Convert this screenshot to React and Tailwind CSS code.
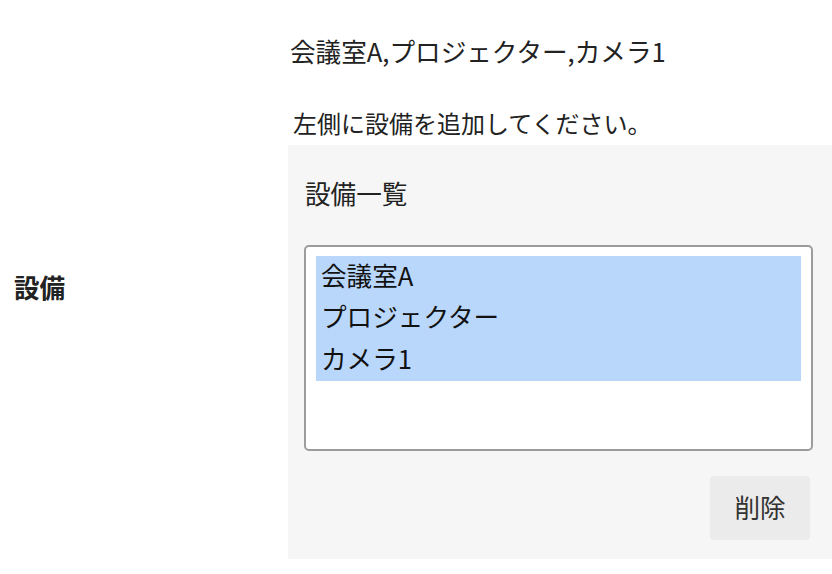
import React from 'react';

const items = ['会議室A', 'プロジェクター', 'カメラ1'];

const App = () => {
  return (
    <div className="flex w-[832px] h-[574px] bg-white text-[25.6px] text-[#222] font-['Noto_Sans_CJK_JP','Noto_Sans',sans-serif]">
      <div className="w-[288px] shrink-0 flex items-center pl-[14px] pt-[1px] font-bold">設備</div>

      <div className="flex-1 pt-[32px]">
        <p className="leading-[38px] pl-[2px]">会議室A,プロジェクター,カメラ1</p>
        <p className="mt-[34px] leading-[38px] pl-[5px] text-[24px]">左側に設備を追加してください。</p>

        <div className="mt-[3px] bg-[#f6f6f6] pl-4 pr-[19px] pt-[30px] pb-[19px]">
          <p className="leading-[38px] pl-[1px] -mt-[1px] pb-[1px]">設備一覧</p>
          <div className="mt-[32px] h-[206px] border-2 border-[#9c9c9c] rounded-[5px] bg-white px-[10px] py-[9px]">
            <div className="bg-[#b9d7fa]">
              {items.map((item) => (
                <div key={item} className="h-[41.7px] flex items-center px-[5px] pb-[4px] text-[#111]">
                  {item}
                </div>
              ))}
            </div>
          </div>
          <div className="flex justify-end mt-[25px] pr-[3px]">
            <button className="w-[100px] h-[64px] bg-[#ebebeb] rounded-[4px] text-[#333] pb-[2px]">削除</button>
          </div>
        </div>
      </div>
    </div>
  );
};

export default App;
